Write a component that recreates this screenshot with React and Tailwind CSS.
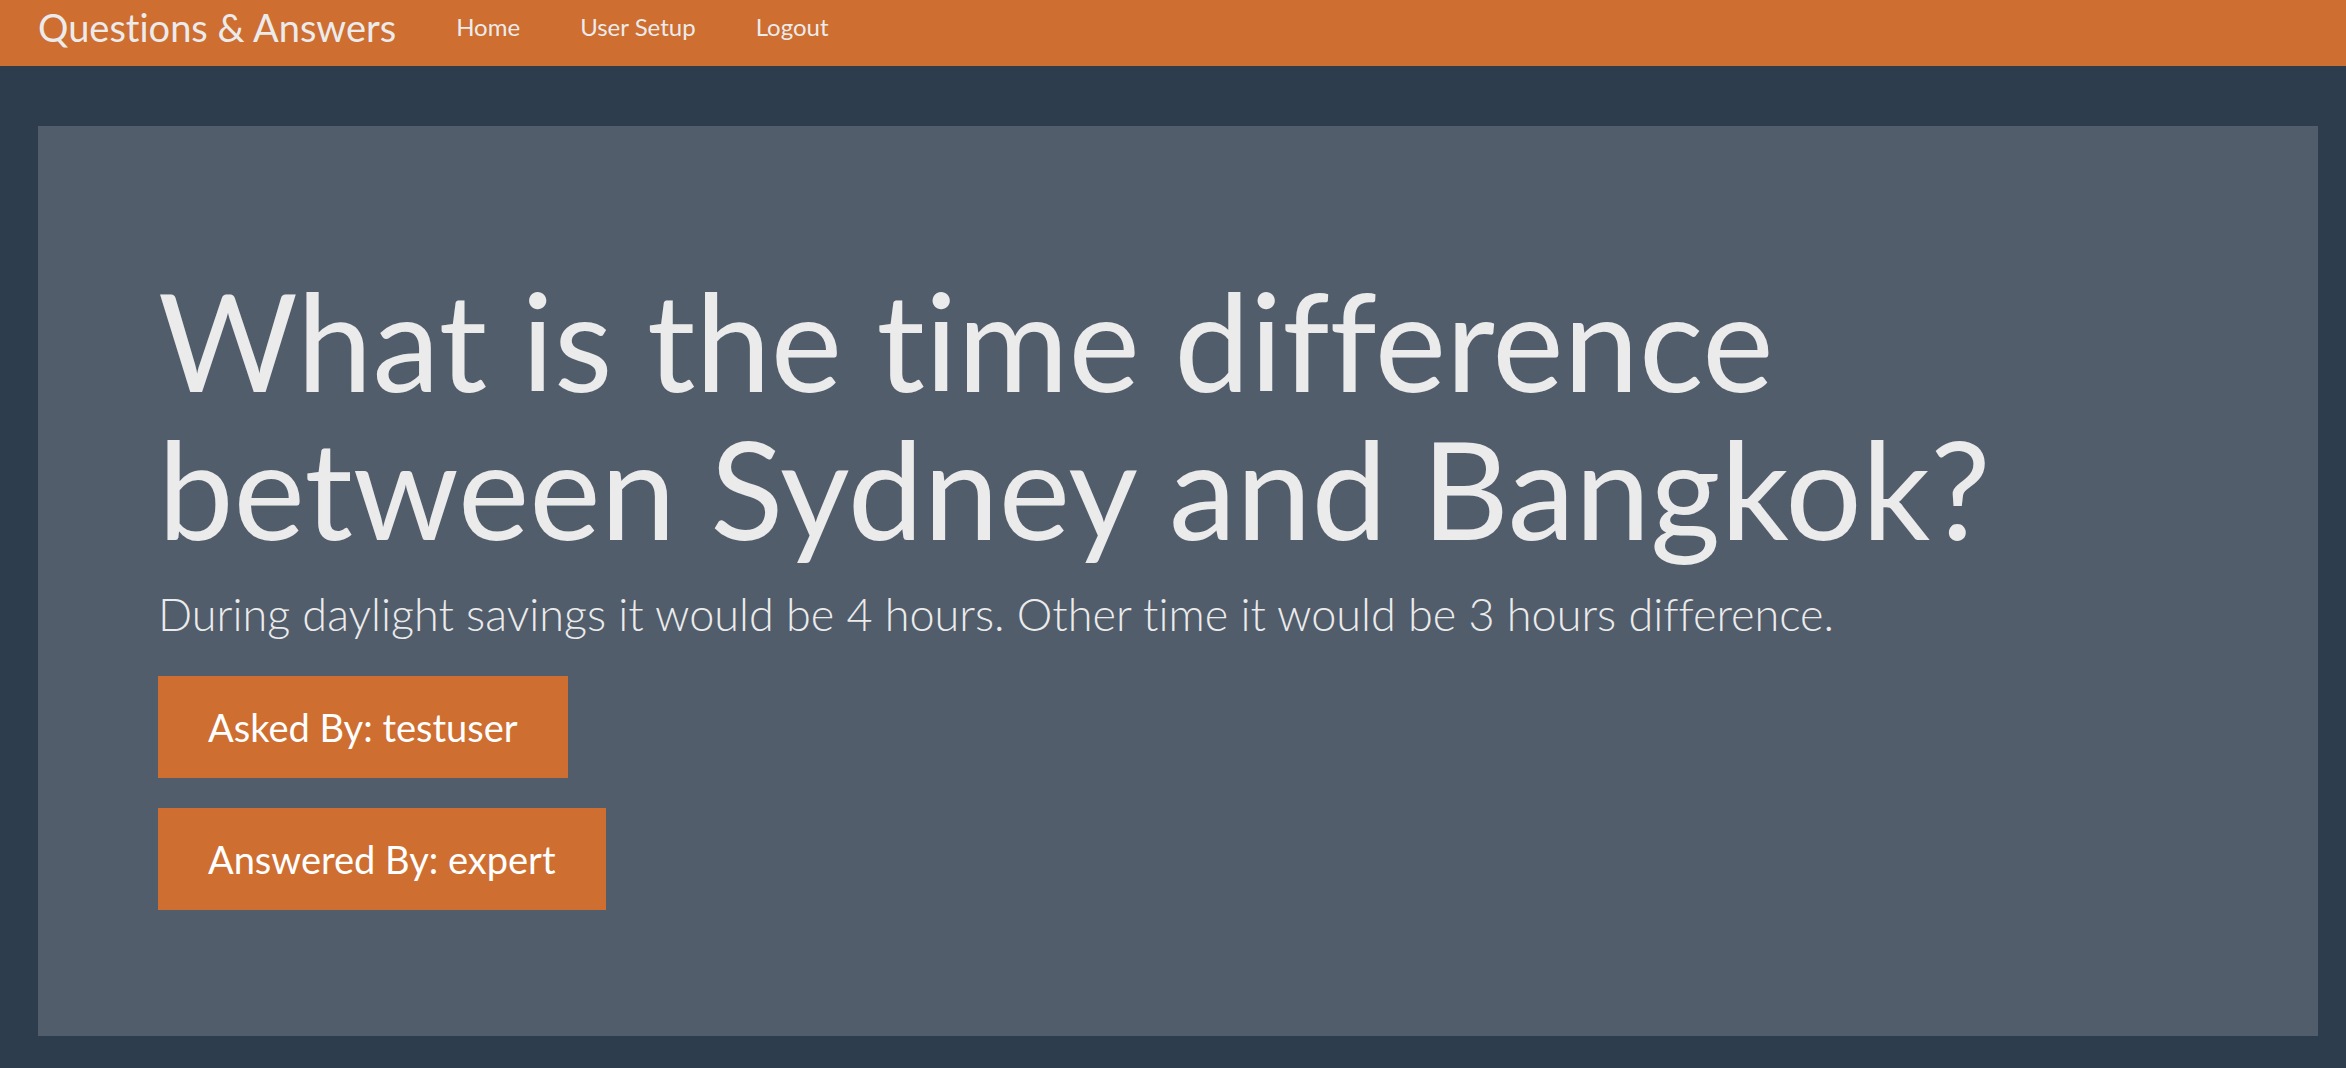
const links = ["Home", "User Setup", "Logout"];

function Badge({ children }) {
  return (
    <button type="button" className="bg-[#ce6e31] px-[50px] py-[30px] text-[38px] leading-[42px] text-white">
      {children}
    </button>
  );
}

export default function App() {
  return (
    <div className="min-h-screen bg-[#2e3d4d] font-['Lato',sans-serif] text-[#ebebeb] [font-variant-ligatures:none]">
      <nav className="flex h-[66px] items-center gap-[60px] bg-[#ce6e31] px-[38px] pb-3">
        <a href="#" className="text-[38px] leading-[54px]">Questions &amp; Answers</a>
        {links.map((l) => (
          <a key={l} href="#" className="text-[24px] leading-[36px]">{l}</a>
        ))}
      </nav>
      <main className="pt-[60px] pr-7 pb-8 pl-[38px]">
        <section className="bg-[#515d6b] px-[120px] pt-[140px] pb-[126px]">
          <h1 className="max-w-[1900px] text-[135px] leading-[148px]">
            What is the time difference between Sydney and Bangkok?
          </h1>
          <p className="mt-[22px] text-[45px] leading-[60px] font-light">
            During daylight savings it would be 4 hours. Other time it would be 3 hours difference.
          </p>
          <div className="mt-8 flex flex-col items-start gap-[30px]">
            <Badge>Asked By: testuser</Badge>
            <Badge>Answered By: expert</Badge>
          </div>
        </section>
      </main>
    </div>
  );
}
